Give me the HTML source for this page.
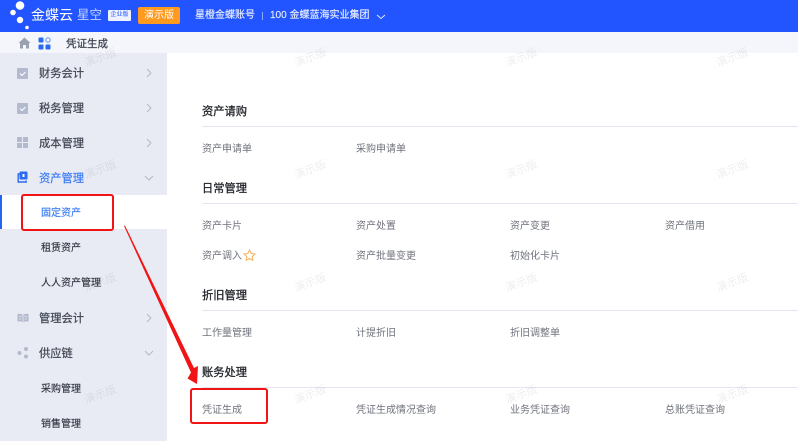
<!DOCTYPE html>
<html><head><meta charset="utf-8"><style>
html,body{margin:0;padding:0}
body{width:798px;height:441px;overflow:hidden;background:#fff;font-family:"Liberation Sans","Noto Sans CJK SC",sans-serif}
#p{position:absolute;left:0;top:0;width:798px;height:441px;overflow:hidden;background:#fff;filter:blur(.35px)}
.t{position:absolute;white-space:nowrap;line-height:16px}
.m{font-size:11.25px;color:#3f4552;-webkit-text-stroke:.2px currentColor}
.s{font-size:10px;color:#333844;-webkit-text-stroke:.15px currentColor}
.l{font-size:10px;color:#6f737c}
.h{font-size:11.25px;color:#23262c;-webkit-text-stroke:.3px currentColor}
.r{position:absolute;left:202px;right:0;height:1px;background:#e4e5ee}
.w{position:absolute;font-size:11px;line-height:14px;color:rgba(0,0,0,.07);transform:rotate(-20deg);white-space:nowrap;z-index:5}
svg{position:absolute}
</style></head><body><div id="p">
<div style="position:absolute;left:0;top:0;width:798px;height:32px;background:#2255ff"></div>
<svg style="left:0;top:0" width="40" height="32"><circle cx="20" cy="5.500" r="4.300" fill="#fff"/><circle cx="13" cy="12.500" r="2.800" fill="#fff"/><circle cx="20" cy="20" r="3.200" fill="#fff"/><circle cx="27" cy="27.500" r="1.800" fill="#fff"/></svg>
<div class="t" style="left:31px;top:6px;font-size:14px;line-height:18px;color:#fff">金蝶云</div>
<div class="t" style="left:77px;top:6px;font-size:12.5px;line-height:18px;color:#c6d4ff">星空</div>
<div style="position:absolute;left:108px;top:10px;width:23px;height:11px;background:#eef2ff;border-radius:1px;color:#2255ff;font-size:6px;line-height:11px;text-align:center;white-space:nowrap">企业版</div>
<div style="position:absolute;left:138px;top:7px;width:42px;height:17px;background:#ff9a1f;border-radius:2px;color:#fff;font-size:10px;line-height:17px;text-align:center">演示版</div>
<div class="t" style="left:195px;top:8px;font-size:10px;color:#e6ebff;-webkit-text-stroke:.15px currentColor">星橙金蝶账号</div>
<div style="position:absolute;left:262px;top:12px;width:1px;height:8px;background:#8ea8ff"></div>
<div class="t" style="left:270px;top:8px;font-size:10px;color:#e6ebff;-webkit-text-stroke:.15px currentColor">100 金蝶蓝海实业集团</div>
<svg style="left:376px;top:14px" width="10" height="6"><path d="M1 1l4 3.500L9 1" fill="none" stroke="#dfe6ff" stroke-width="1"/></svg>

<div style="position:absolute;left:0;top:32px;width:798px;height:21px;background:#f5f6fb"></div>
<svg style="left:18px;top:37px" width="13" height="12"><path d="M6.500 .5L12.500 6H11v5.500H8V8H5v3.500H2V6H.5z" fill="#9aa2b2"/></svg>
<svg style="left:38px;top:37px" width="13" height="13"><rect x="0.500" y="0.500" width="5" height="5" rx="1" fill="#2a6bf2"/><circle cx="10" cy="3" r="2.200" fill="none" stroke="#5a8df5" stroke-width="1"/><rect x="0.500" y="7.500" width="5" height="5" rx="1" fill="#2a6bf2"/><rect x="7.500" y="7.500" width="5" height="5" rx="1" fill="#2a6bf2"/></svg>
<div class="t" style="left:66px;top:36px;font-size:10.5px;color:#3f4552;-webkit-text-stroke:.25px currentColor">凭证生成</div>

<div style="position:absolute;left:0;top:53px;width:167px;height:388px;background:#e9ebf4"></div>
<div style="position:absolute;left:0;top:195px;width:167px;height:34px;background:#fff"></div>
<div style="position:absolute;left:0;top:195px;width:2px;height:34px;background:#2266f0"></div>

<svg style="left:17px;top:68px" width="11" height="11"><rect width="11" height="11" rx="1" fill="#b3bacd"/><path d="M3 5.500l2 2 3.500-3.500" fill="none" stroke="#fff" stroke-width="1"/></svg>
<svg style="left:17px;top:103px" width="11" height="11"><rect width="11" height="11" rx="1" fill="#b3bacd"/><path d="M3 5.500l2 2 3.500-3.500" fill="none" stroke="#fff" stroke-width="1"/></svg>
<svg style="left:17px;top:137px" width="11" height="11"><rect width="11" height="11" rx="1" fill="#b3bacd"/><path d="M5.500 0v11M0 5.500h11" stroke="#e9ebf4" stroke-width="1"/></svg>
<svg style="left:17px;top:171px" width="12" height="12"><path d="M3 3H1.200v8h8V9.500" fill="none" stroke="#2a6bf2" stroke-width="1.400"/><rect x="2.500" y="0.500" width="8" height="8" rx="1" fill="#2a6bf2"/><rect x="5.500" y="3" width="2" height="3" fill="#fff"/></svg>
<svg style="left:17px;top:313px" width="12" height="10"><path d="M6 2C4.500 .8 2.500 .8 .5 1v7.500c2-.2 4-.2 5.500 1 1.500-1.200 3.500-1.200 5.500-1V1C9.500 .8 7.500 .8 6 2z" fill="#b3bacd"/><path d="M6 2v7.500M2 3.500h2.500M7.500 3.500H10M2 6h2.500M7.500 6H10" stroke="#e9ebf4" stroke-width=".8"/></svg>
<svg style="left:17px;top:347px" width="12" height="12"><circle cx="2.500" cy="6" r="2" fill="#b3bacd"/><circle cx="9" cy="2" r="2" fill="#b3bacd"/><circle cx="9" cy="9.500" r="2" fill="#b3bacd"/></svg>

<div class="t m" style="left:39px;top:66px">财务会计</div>
<div class="t m" style="left:39px;top:101px">税务管理</div>
<div class="t m" style="left:39px;top:136px">成本管理</div>
<div class="t m" style="left:39px;top:171px;color:#3b7cf5">资产管理</div>
<div class="t m" style="left:39px;top:311px">管理会计</div>
<div class="t m" style="left:39px;top:346px">供应链</div>
<div class="t s" style="left:41px;top:206px;color:#3b7cf5">固定资产</div>
<div class="t s" style="left:41px;top:241px">租赁资产</div>
<div class="t s" style="left:41px;top:276px">人人资产管理</div>
<div class="t s" style="left:41px;top:382px">采购管理</div>
<div class="t s" style="left:41px;top:417px">销售管理</div>

<svg style="left:146px;top:68px" width="6" height="10"><path d="M1 1l4 4-4 4" fill="none" stroke="#b4b9c4"/></svg>
<svg style="left:146px;top:103px" width="6" height="10"><path d="M1 1l4 4-4 4" fill="none" stroke="#b4b9c4"/></svg>
<svg style="left:146px;top:138px" width="6" height="10"><path d="M1 1l4 4-4 4" fill="none" stroke="#b4b9c4"/></svg>
<svg style="left:146px;top:313px" width="6" height="10"><path d="M1 1l4 4-4 4" fill="none" stroke="#b4b9c4"/></svg>
<svg style="left:144px;top:175px" width="10" height="6"><path d="M1 1l4 4 4-4" fill="none" stroke="#b4b9c4"/></svg>
<svg style="left:144px;top:350px" width="10" height="6"><path d="M1 1l4 4 4-4" fill="none" stroke="#b4b9c4"/></svg>

<div class="t h" style="left:202px;top:104px">资产请购</div><div class="r" style="top:126px"></div>
<div class="t l" style="left:202px;top:142px">资产申请单</div>
<div class="t l" style="left:356px;top:142px">采购申请单</div>

<div class="t h" style="left:202px;top:181px">日常管理</div><div class="r" style="top:203px"></div>
<div class="t l" style="left:202px;top:219px">资产卡片</div>
<div class="t l" style="left:356px;top:219px">资产处置</div>
<div class="t l" style="left:510px;top:219px">资产变更</div>
<div class="t l" style="left:665px;top:219px">资产借用</div>
<div class="t l" style="left:202px;top:249px">资产调入</div>
<svg style="left:243px;top:249px" width="13" height="12"><path d="M6.500 1l1.700 3.500 3.800.5-2.800 2.600.7 3.800-3.400-1.900-3.400 1.900.7-3.800L1 5l3.800-.5z" fill="none" stroke="#f5b25a" stroke-width="1"/></svg>
<div class="t l" style="left:356px;top:249px">资产批量变更</div>
<div class="t l" style="left:510px;top:249px">初始化卡片</div>

<div class="t h" style="left:202px;top:288px">折旧管理</div><div class="r" style="top:310px"></div>
<div class="t l" style="left:202px;top:326px">工作量管理</div>
<div class="t l" style="left:356px;top:326px">计提折旧</div>
<div class="t l" style="left:510px;top:326px">折旧调整单</div>

<div class="t h" style="left:202px;top:365px">账务处理</div><div class="r" style="top:387px"></div>
<div class="t l" style="left:202px;top:403px">凭证生成</div>
<div class="t l" style="left:356px;top:403px">凭证生成情况查询</div>
<div class="t l" style="left:510px;top:403px">业务凭证查询</div>
<div class="t l" style="left:665px;top:403px">总账凭证查询</div>

<div class="w" style="left:84px;top:51px">演示版</div><div class="w" style="left:294px;top:51px">演示版</div><div class="w" style="left:505px;top:51px">演示版</div><div class="w" style="left:716px;top:51px">演示版</div>
<div class="w" style="left:84px;top:163px">演示版</div><div class="w" style="left:294px;top:163px">演示版</div><div class="w" style="left:505px;top:163px">演示版</div><div class="w" style="left:716px;top:163px">演示版</div>
<div class="w" style="left:84px;top:276px">演示版</div><div class="w" style="left:294px;top:276px">演示版</div><div class="w" style="left:505px;top:276px">演示版</div><div class="w" style="left:716px;top:276px">演示版</div>
<div class="w" style="left:84px;top:388px">演示版</div><div class="w" style="left:294px;top:388px">演示版</div><div class="w" style="left:505px;top:388px">演示版</div><div class="w" style="left:716px;top:388px">演示版</div>

<svg style="left:0;top:0;z-index:6" width="798" height="441">
<rect x="22" y="195" width="91" height="35" rx="2" fill="none" stroke="#f01414" stroke-width="2"/>
<rect x="191" y="389" width="76" height="34" rx="2" fill="none" stroke="#f01414" stroke-width="2"/>
<path d="M124 226L125 225.600 194 368 198 366 197 384 187.500 378.500 191 372.500z" fill="#f01414"/>
</svg>
</div></body></html>
